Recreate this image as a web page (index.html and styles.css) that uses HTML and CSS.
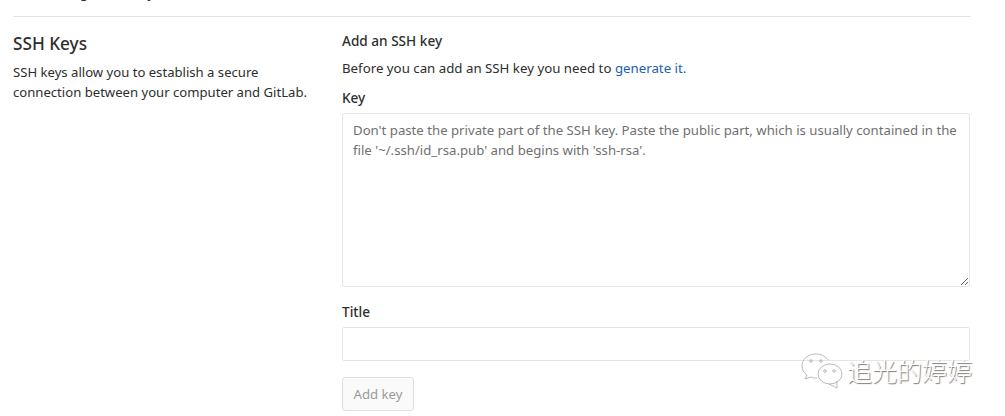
FILE: index.html
```html
<!DOCTYPE html>
<html lang="en">
<head>
<meta charset="utf-8">
<title>SSH Keys</title>
<link rel="stylesheet" href="styles.css">
</head>
<body>
<div class="page">
  <div class="crumbs">User Settings &rsaquo; SSH Keys</div>
  <div class="row">
    <aside class="side">
      <h2 class="side-title">SSH Keys</h2>
      <p class="side-text">SSH keys allow you to establish a secure connection between your computer and GitLab.</p>
    </aside>
    <main class="main">
      <h3 class="form-title">Add an SSH key</h3>
      <p class="intro">Before you can add an SSH key you need to <a class="link" href="#">generate it.</a></p>
      <label class="label" for="key">Key</label>
      <textarea class="area" id="key" placeholder="Don't paste the private part of the SSH key. Paste the public part, which is usually contained in the file '~/.ssh/id_rsa.pub' and begins with 'ssh-rsa'."></textarea>
      <label class="label title-label" for="title">Title</label>
      <input class="input" id="title" type="text">
      <button class="btn" type="button">Add key</button>
    </main>
  </div>
</div>
<div class="mark">
  <svg class="mark-icon" width="42" height="36" viewBox="0 0 42 36" fill="none" stroke="#a8a8a8" stroke-width="0.8">
    <path d="M27 7C24 3 20 1 15 1C7 1 1 6 1 13C1 17 3 20 6 22L4 26L10 24C12 25 14 25 16 25"/>
    <ellipse cx="29" cy="21" rx="12" ry="10"/>
    <path d="M28 31L36 35L36 28"/>
    <circle cx="10" cy="8" r="1.3"/><circle cx="20" cy="8" r="1.3"/>
    <circle cx="24" cy="18" r="1.3"/><circle cx="33" cy="18" r="1.3"/>
  </svg>
  <span class="mark-text">追光的婷婷</span>
</div>
</body>
</html>
```
FILE: styles.css
```css
* { box-sizing: border-box; }
html, body { margin: 0; padding: 0; background: #fff; }
body {
  width: 1005px;
  height: 416px;
  overflow: hidden;
  position: relative;
  font-family: "Noto Sans", "Open Sans", sans-serif;
  font-size: 13px;
  color: #2e2e2e;
}
.page { width: 958px; margin-left: 13px; }
.crumbs {
  height: 17px;
  border-bottom: 1px solid #e5e5e5;
  line-height: 18px;
  overflow: hidden;
  color: #2e2e2e;
  font-size: 13px;
}
.crumbs::before { content: ""; display: block; margin-top: -16px; }
.row { display: flex; }
.side { width: 329px; flex: none; }
.side-title {
  margin: 17px 0 0;
  font-size: 17.2px;
  line-height: 20px;
  font-weight: 500;
}
.side-text {
  margin: 8px 0 0;
  line-height: 20px;
  font-size: 13.12px;
  width: 300px;
}
.main { flex: 1; display: flex; flex-direction: column; align-items: flex-start; }
.form-title { margin: 15px 0 0; font-size: 13.6px; line-height: 18px; font-weight: 500; }
.intro { margin: 9px 0 0; line-height: 18px; font-size: 13.27px; }
.link { color: #1b5fb0; text-decoration: none; }
.label { display: block; margin-top: 12px; line-height: 18px; font-weight: 500; font-size: 13.6px; }
.title-label { margin-top: 16px; }
.area {
  display: block;
  width: 628px;
  height: 174px;
  margin-top: 6px;
  padding: 6px 4px 6px 10px;
  border: 1px solid #e5e5e5;
  border-radius: 2px;
  font: 13.2px/20px "Noto Sans", "Open Sans", sans-serif;
  color: #2e2e2e;
  outline: none;
}
.area::placeholder { color: #707070; opacity: 1; }
.input {
  display: block;
  width: 628px;
  height: 34px;
  margin-top: 6px;
  border: 1px solid #e5e5e5;
  border-radius: 2px;
  outline: none;
}
.btn {
  margin-top: 16px;
  width: 72px;
  height: 34px;
  padding: 0;
  border: 1px solid #e0e0e0;
  border-radius: 3px;
  background: #fafafa;
  color: #9a9a9a;
  font: 13.2px "Noto Sans", "Open Sans", sans-serif;
}
.mark {
  position: absolute;
  left: 801px;
  top: 353px;
  display: flex;
  align-items: center;
}
.mark-icon { display: block; margin-right: 4px; }
.mark-text {
  font-family: "Noto Sans CJK SC", sans-serif;
  font-size: 25px;
  font-weight: 300;
  line-height: 30px;
  padding-bottom: 3px;
  color: #fff;
  text-shadow: 1px 1px 1px #777;
}
```
